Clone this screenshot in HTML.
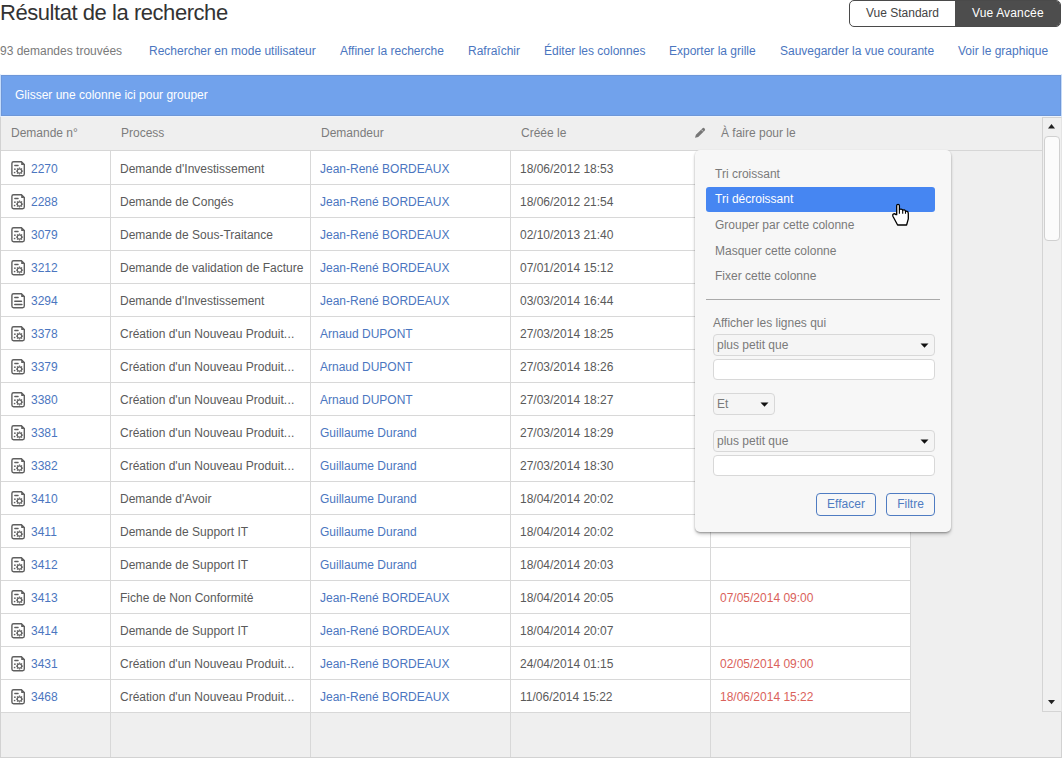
<!DOCTYPE html><html><head><meta charset="utf-8"><style>
*{margin:0;padding:0;box-sizing:border-box}
html,body{width:1062px;height:759px;overflow:hidden;background:#fff;font-family:"Liberation Sans",sans-serif;font-size:12px;position:relative}
.t{position:absolute;white-space:nowrap;line-height:14px;font-size:12px}
.title{position:absolute;left:0;top:0px;font-size:22px;letter-spacing:-0.45px;line-height:26px;color:#333;white-space:nowrap}
.tog{position:absolute;left:849px;top:0;width:212px;height:27px;border:1px solid #4a4a4a;border-radius:5px;overflow:hidden;background:#fff}
.tog div{position:absolute;top:0;height:25px;line-height:16px;padding-top:0;white-space:nowrap;font-size:12px}
.tog .std{left:0;width:105px;color:#444;text-indent:16px;top:4px}
.tog .adv{left:105px;width:106px;letter-spacing:.15px;background:#4d4d4d;color:#fff;text-indent:17px;padding-top:4px;height:26px}
.cnt{color:#7a7a7a}
.lnk{color:#4b76c0}
.txt{color:#5a5a5a}
.red{color:#da625b}
.ht{color:#7c7c7c}
.grp{color:#fff}
.grid{position:absolute;left:0;top:75px;width:1062px;height:683px;border:1px solid #d2d2d2;background:#efefef}
.grpbar{position:absolute;left:0;top:74px;width:1062px;height:43px;border:1px solid #c6dcfa;border-top-color:#f4f8fe;border-bottom-color:#eef4fc;background:#71a2ec;box-shadow:inset 0 0 0 1px #6e97d8}
.hdr{position:absolute;left:1px;top:150px;width:1041px;height:1px;background:#d6d6d6}
.data{position:absolute;left:1px;top:151px;width:909px;height:561px;background:#fff}
.hl{position:absolute;left:1px;width:909px;height:1px;background:#d8d8d8}
.vl{position:absolute;top:151px;width:1px;height:606px;background:#d8d8d8}
.sb{position:absolute;left:1042px;top:117px;width:20px;height:595px;border:1px solid #d4d4d4;border-right-color:#e4e4e4;background:#f0f0f0}
.thumb{position:absolute;left:1px;top:18px;width:16px;height:105px;border:1px solid #d0d0d0;border-radius:4px;background:#fbfbfb}
.menu{position:absolute;left:695px;top:150px;width:256px;height:382px;background:#f7f7f7;border-radius:5px;box-shadow:0 1px 2px rgba(0,0,0,.3),0 3px 4px -1px rgba(0,0,0,.22)}
.hi{position:absolute;left:706px;top:187px;width:229px;height:25px;background:#4686f2;border-radius:3px}
.mt{color:#7a7a7a}
.mt.sel{color:#fff}
.sep{position:absolute;left:706px;top:299px;width:234px;height:1px;background:#aaa}
.sel1{position:absolute;left:713px;width:222px;height:22px;border:1px solid #d8d8d8;border-radius:4px;background:#f5f5f5}
.sel2{position:absolute;left:713px;top:393px;width:62px;height:22px;border:1px solid #d8d8d8;border-radius:4px;background:#f5f5f5}
.inp{position:absolute;left:713px;width:222px;height:21px;border:1px solid #d8d8d8;border-radius:4px;background:#fff}
.btn{position:absolute;top:493px;height:23px;border:1.5px solid #4f7cc2;border-radius:4px;color:#4f7cc2;text-align:center;line-height:20px;font-size:12px}
</style></head><body><div class="title">Résultat de la recherche</div>
<div class="tog"><div class="std">Vue Standard</div><div class="adv">Vue Avancée</div></div>
<div class="t cnt" style="left:0px;top:44px;">93 demandes trouvées</div>
<div class="t lnk" style="left:149px;top:44px;">Rechercher en mode utilisateur</div>
<div class="t lnk" style="left:340px;top:44px;">Affiner la recherche</div>
<div class="t lnk" style="left:468px;top:44px;">Rafraîchir</div>
<div class="t lnk" style="left:544px;top:44px;">Éditer les colonnes</div>
<div class="t lnk" style="left:669px;top:44px;">Exporter la grille</div>
<div class="t lnk" style="left:780px;top:44px;">Sauvegarder la vue courante</div>
<div class="t lnk" style="left:958px;top:44px;">Voir le graphique</div>
<div class="grid"></div>
<div class="grpbar"></div>
<div class="t grp" style="left:15px;top:88px;">Glisser une colonne ici pour grouper</div>
<div class="hdr"></div>
<div class="t ht" style="left:11px;top:126px;">Demande n°</div>
<div class="t ht" style="left:121px;top:126px;">Process</div>
<div class="t ht" style="left:321px;top:126px;">Demandeur</div>
<div class="t ht" style="left:521px;top:126px;">Créée le</div>
<div class="t ht" style="left:721px;top:126px;">À faire pour le</div>
<svg class="pen" width="25" height="25" viewBox="0 0 25 25" style="position:absolute;left:688px;top:120px"><path d="M7.0 17.8L7.9 14.8L14.3 8.4Q15.5 7.3 16.6 8.4Q17.7 9.6 16.6 10.7L10.2 17.1Z" fill="#777"/><path d="M13.2 9.5L15.2 11.5" stroke="#f0f0f0" stroke-width="0.7"/></svg>
<div class="data"></div>
<div class="hl" style="top:184px"></div>
<div class="hl" style="top:217px"></div>
<div class="hl" style="top:250px"></div>
<div class="hl" style="top:283px"></div>
<div class="hl" style="top:316px"></div>
<div class="hl" style="top:349px"></div>
<div class="hl" style="top:382px"></div>
<div class="hl" style="top:415px"></div>
<div class="hl" style="top:448px"></div>
<div class="hl" style="top:481px"></div>
<div class="hl" style="top:514px"></div>
<div class="hl" style="top:547px"></div>
<div class="hl" style="top:580px"></div>
<div class="hl" style="top:613px"></div>
<div class="hl" style="top:646px"></div>
<div class="hl" style="top:679px"></div>
<div class="hl" style="top:712px"></div>
<div class="vl" style="left:110px"></div>
<div class="vl" style="left:310px"></div>
<div class="vl" style="left:510px"></div>
<div class="vl" style="left:710px"></div>
<div class="vl" style="left:910px"></div>
<svg width="22" height="22" viewBox="0 0 22 22" style="position:absolute;left:8px;top:158px"><path d="M5.6 3.7H13.4L16.3 6.6V16Q16.3 17.7 14.6 17.7H5.6Q3.9 17.7 3.9 16V5.4Q3.9 3.7 5.6 3.7Z" fill="none" stroke="#5f5f5f" stroke-width="1.4"/><path d="M13.2 3.6L16.5 6.9H13.2Z" fill="#5f5f5f"/><path d="M6.8 7.5H10.1" stroke="#5f5f5f" stroke-width="1.3" stroke-linecap="round"/><circle cx="6.9" cy="11.2" r=".85" fill="#5f5f5f"/><circle cx="6.6" cy="14.5" r=".85" fill="#5f5f5f"/><circle cx="11.5" cy="13.0" r="2.17" fill="none" stroke="#5f5f5f" stroke-width="1.15"/><path d="M11.50 10.40L11.50 9.45M13.34 11.16L14.01 10.49M14.10 13.00L15.05 13.00M13.34 14.84L14.01 15.51M11.50 15.60L11.50 16.55M9.66 14.84L8.99 15.51M8.90 13.00L7.95 13.00M9.66 11.16L8.99 10.49" stroke="#5f5f5f" stroke-width="1.25"/></svg>
<div class="t lnk" style="left:31px;top:162px;">2270</div>
<div class="t txt" style="left:120px;top:162px;">Demande d&#39;Investissement</div>
<div class="t lnk" style="left:320px;top:162px;">Jean-René BORDEAUX</div>
<div class="t txt" style="left:520px;top:162px;">18/06/2012 18:53</div>
<svg width="22" height="22" viewBox="0 0 22 22" style="position:absolute;left:8px;top:191px"><path d="M5.6 3.7H13.4L16.3 6.6V16Q16.3 17.7 14.6 17.7H5.6Q3.9 17.7 3.9 16V5.4Q3.9 3.7 5.6 3.7Z" fill="none" stroke="#5f5f5f" stroke-width="1.4"/><path d="M13.2 3.6L16.5 6.9H13.2Z" fill="#5f5f5f"/><path d="M6.8 7.5H10.1" stroke="#5f5f5f" stroke-width="1.3" stroke-linecap="round"/><circle cx="6.9" cy="11.2" r=".85" fill="#5f5f5f"/><circle cx="6.6" cy="14.5" r=".85" fill="#5f5f5f"/><circle cx="11.5" cy="13.0" r="2.17" fill="none" stroke="#5f5f5f" stroke-width="1.15"/><path d="M11.50 10.40L11.50 9.45M13.34 11.16L14.01 10.49M14.10 13.00L15.05 13.00M13.34 14.84L14.01 15.51M11.50 15.60L11.50 16.55M9.66 14.84L8.99 15.51M8.90 13.00L7.95 13.00M9.66 11.16L8.99 10.49" stroke="#5f5f5f" stroke-width="1.25"/></svg>
<div class="t lnk" style="left:31px;top:195px;">2288</div>
<div class="t txt" style="left:120px;top:195px;">Demande de Congés</div>
<div class="t lnk" style="left:320px;top:195px;">Jean-René BORDEAUX</div>
<div class="t txt" style="left:520px;top:195px;">18/06/2012 21:54</div>
<svg width="22" height="22" viewBox="0 0 22 22" style="position:absolute;left:8px;top:224px"><path d="M5.6 3.7H13.4L16.3 6.6V16Q16.3 17.7 14.6 17.7H5.6Q3.9 17.7 3.9 16V5.4Q3.9 3.7 5.6 3.7Z" fill="none" stroke="#5f5f5f" stroke-width="1.4"/><path d="M13.2 3.6L16.5 6.9H13.2Z" fill="#5f5f5f"/><path d="M6.8 7.5H10.1" stroke="#5f5f5f" stroke-width="1.3" stroke-linecap="round"/><circle cx="6.9" cy="11.2" r=".85" fill="#5f5f5f"/><circle cx="6.6" cy="14.5" r=".85" fill="#5f5f5f"/><circle cx="11.5" cy="13.0" r="2.17" fill="none" stroke="#5f5f5f" stroke-width="1.15"/><path d="M11.50 10.40L11.50 9.45M13.34 11.16L14.01 10.49M14.10 13.00L15.05 13.00M13.34 14.84L14.01 15.51M11.50 15.60L11.50 16.55M9.66 14.84L8.99 15.51M8.90 13.00L7.95 13.00M9.66 11.16L8.99 10.49" stroke="#5f5f5f" stroke-width="1.25"/></svg>
<div class="t lnk" style="left:31px;top:228px;">3079</div>
<div class="t txt" style="left:120px;top:228px;">Demande de Sous-Traitance</div>
<div class="t lnk" style="left:320px;top:228px;">Jean-René BORDEAUX</div>
<div class="t txt" style="left:520px;top:228px;">02/10/2013 21:40</div>
<svg width="22" height="22" viewBox="0 0 22 22" style="position:absolute;left:8px;top:257px"><path d="M5.6 3.7H13.4L16.3 6.6V16Q16.3 17.7 14.6 17.7H5.6Q3.9 17.7 3.9 16V5.4Q3.9 3.7 5.6 3.7Z" fill="none" stroke="#5f5f5f" stroke-width="1.4"/><path d="M13.2 3.6L16.5 6.9H13.2Z" fill="#5f5f5f"/><path d="M6.8 7.5H10.1" stroke="#5f5f5f" stroke-width="1.3" stroke-linecap="round"/><circle cx="6.9" cy="11.2" r=".85" fill="#5f5f5f"/><circle cx="6.6" cy="14.5" r=".85" fill="#5f5f5f"/><circle cx="11.5" cy="13.0" r="2.17" fill="none" stroke="#5f5f5f" stroke-width="1.15"/><path d="M11.50 10.40L11.50 9.45M13.34 11.16L14.01 10.49M14.10 13.00L15.05 13.00M13.34 14.84L14.01 15.51M11.50 15.60L11.50 16.55M9.66 14.84L8.99 15.51M8.90 13.00L7.95 13.00M9.66 11.16L8.99 10.49" stroke="#5f5f5f" stroke-width="1.25"/></svg>
<div class="t lnk" style="left:31px;top:261px;">3212</div>
<div class="t txt" style="left:120px;top:261px;">Demande de validation de Facture</div>
<div class="t lnk" style="left:320px;top:261px;">Jean-René BORDEAUX</div>
<div class="t txt" style="left:520px;top:261px;">07/01/2014 15:12</div>
<svg width="22" height="22" viewBox="0 0 22 22" style="position:absolute;left:8px;top:290px"><path d="M5.6 3.7H13.4L16.3 6.6V16Q16.3 17.7 14.6 17.7H5.6Q3.9 17.7 3.9 16V5.4Q3.9 3.7 5.6 3.7Z" fill="none" stroke="#5f5f5f" stroke-width="1.4"/><path d="M13.2 3.6L16.5 6.9H13.2Z" fill="#5f5f5f"/><path d="M6.8 7.5H10.1M6.8 11.2H13.5M6.8 14.5H13.9" stroke="#5a5a5a" stroke-width="1.45" stroke-linecap="round"/></svg>
<div class="t lnk" style="left:31px;top:294px;">3294</div>
<div class="t txt" style="left:120px;top:294px;">Demande d&#39;Investissement</div>
<div class="t lnk" style="left:320px;top:294px;">Jean-René BORDEAUX</div>
<div class="t txt" style="left:520px;top:294px;">03/03/2014 16:44</div>
<svg width="22" height="22" viewBox="0 0 22 22" style="position:absolute;left:8px;top:323px"><path d="M5.6 3.7H13.4L16.3 6.6V16Q16.3 17.7 14.6 17.7H5.6Q3.9 17.7 3.9 16V5.4Q3.9 3.7 5.6 3.7Z" fill="none" stroke="#5f5f5f" stroke-width="1.4"/><path d="M13.2 3.6L16.5 6.9H13.2Z" fill="#5f5f5f"/><path d="M6.8 7.5H10.1" stroke="#5f5f5f" stroke-width="1.3" stroke-linecap="round"/><circle cx="6.9" cy="11.2" r=".85" fill="#5f5f5f"/><circle cx="6.6" cy="14.5" r=".85" fill="#5f5f5f"/><circle cx="11.5" cy="13.0" r="2.17" fill="none" stroke="#5f5f5f" stroke-width="1.15"/><path d="M11.50 10.40L11.50 9.45M13.34 11.16L14.01 10.49M14.10 13.00L15.05 13.00M13.34 14.84L14.01 15.51M11.50 15.60L11.50 16.55M9.66 14.84L8.99 15.51M8.90 13.00L7.95 13.00M9.66 11.16L8.99 10.49" stroke="#5f5f5f" stroke-width="1.25"/></svg>
<div class="t lnk" style="left:31px;top:327px;">3378</div>
<div class="t txt" style="left:120px;top:327px;">Création d&#39;un Nouveau Produit<span style="letter-spacing:.35px">...</span></div>
<div class="t lnk" style="left:320px;top:327px;">Arnaud DUPONT</div>
<div class="t txt" style="left:520px;top:327px;">27/03/2014 18:25</div>
<svg width="22" height="22" viewBox="0 0 22 22" style="position:absolute;left:8px;top:356px"><path d="M5.6 3.7H13.4L16.3 6.6V16Q16.3 17.7 14.6 17.7H5.6Q3.9 17.7 3.9 16V5.4Q3.9 3.7 5.6 3.7Z" fill="none" stroke="#5f5f5f" stroke-width="1.4"/><path d="M13.2 3.6L16.5 6.9H13.2Z" fill="#5f5f5f"/><path d="M6.8 7.5H10.1" stroke="#5f5f5f" stroke-width="1.3" stroke-linecap="round"/><circle cx="6.9" cy="11.2" r=".85" fill="#5f5f5f"/><circle cx="6.6" cy="14.5" r=".85" fill="#5f5f5f"/><circle cx="11.5" cy="13.0" r="2.17" fill="none" stroke="#5f5f5f" stroke-width="1.15"/><path d="M11.50 10.40L11.50 9.45M13.34 11.16L14.01 10.49M14.10 13.00L15.05 13.00M13.34 14.84L14.01 15.51M11.50 15.60L11.50 16.55M9.66 14.84L8.99 15.51M8.90 13.00L7.95 13.00M9.66 11.16L8.99 10.49" stroke="#5f5f5f" stroke-width="1.25"/></svg>
<div class="t lnk" style="left:31px;top:360px;">3379</div>
<div class="t txt" style="left:120px;top:360px;">Création d&#39;un Nouveau Produit<span style="letter-spacing:.35px">...</span></div>
<div class="t lnk" style="left:320px;top:360px;">Arnaud DUPONT</div>
<div class="t txt" style="left:520px;top:360px;">27/03/2014 18:26</div>
<svg width="22" height="22" viewBox="0 0 22 22" style="position:absolute;left:8px;top:389px"><path d="M5.6 3.7H13.4L16.3 6.6V16Q16.3 17.7 14.6 17.7H5.6Q3.9 17.7 3.9 16V5.4Q3.9 3.7 5.6 3.7Z" fill="none" stroke="#5f5f5f" stroke-width="1.4"/><path d="M13.2 3.6L16.5 6.9H13.2Z" fill="#5f5f5f"/><path d="M6.8 7.5H10.1" stroke="#5f5f5f" stroke-width="1.3" stroke-linecap="round"/><circle cx="6.9" cy="11.2" r=".85" fill="#5f5f5f"/><circle cx="6.6" cy="14.5" r=".85" fill="#5f5f5f"/><circle cx="11.5" cy="13.0" r="2.17" fill="none" stroke="#5f5f5f" stroke-width="1.15"/><path d="M11.50 10.40L11.50 9.45M13.34 11.16L14.01 10.49M14.10 13.00L15.05 13.00M13.34 14.84L14.01 15.51M11.50 15.60L11.50 16.55M9.66 14.84L8.99 15.51M8.90 13.00L7.95 13.00M9.66 11.16L8.99 10.49" stroke="#5f5f5f" stroke-width="1.25"/></svg>
<div class="t lnk" style="left:31px;top:393px;">3380</div>
<div class="t txt" style="left:120px;top:393px;">Création d&#39;un Nouveau Produit<span style="letter-spacing:.35px">...</span></div>
<div class="t lnk" style="left:320px;top:393px;">Arnaud DUPONT</div>
<div class="t txt" style="left:520px;top:393px;">27/03/2014 18:27</div>
<svg width="22" height="22" viewBox="0 0 22 22" style="position:absolute;left:8px;top:422px"><path d="M5.6 3.7H13.4L16.3 6.6V16Q16.3 17.7 14.6 17.7H5.6Q3.9 17.7 3.9 16V5.4Q3.9 3.7 5.6 3.7Z" fill="none" stroke="#5f5f5f" stroke-width="1.4"/><path d="M13.2 3.6L16.5 6.9H13.2Z" fill="#5f5f5f"/><path d="M6.8 7.5H10.1" stroke="#5f5f5f" stroke-width="1.3" stroke-linecap="round"/><circle cx="6.9" cy="11.2" r=".85" fill="#5f5f5f"/><circle cx="6.6" cy="14.5" r=".85" fill="#5f5f5f"/><circle cx="11.5" cy="13.0" r="2.17" fill="none" stroke="#5f5f5f" stroke-width="1.15"/><path d="M11.50 10.40L11.50 9.45M13.34 11.16L14.01 10.49M14.10 13.00L15.05 13.00M13.34 14.84L14.01 15.51M11.50 15.60L11.50 16.55M9.66 14.84L8.99 15.51M8.90 13.00L7.95 13.00M9.66 11.16L8.99 10.49" stroke="#5f5f5f" stroke-width="1.25"/></svg>
<div class="t lnk" style="left:31px;top:426px;">3381</div>
<div class="t txt" style="left:120px;top:426px;">Création d&#39;un Nouveau Produit<span style="letter-spacing:.35px">...</span></div>
<div class="t lnk" style="left:320px;top:426px;">Guillaume Durand</div>
<div class="t txt" style="left:520px;top:426px;">27/03/2014 18:29</div>
<svg width="22" height="22" viewBox="0 0 22 22" style="position:absolute;left:8px;top:455px"><path d="M5.6 3.7H13.4L16.3 6.6V16Q16.3 17.7 14.6 17.7H5.6Q3.9 17.7 3.9 16V5.4Q3.9 3.7 5.6 3.7Z" fill="none" stroke="#5f5f5f" stroke-width="1.4"/><path d="M13.2 3.6L16.5 6.9H13.2Z" fill="#5f5f5f"/><path d="M6.8 7.5H10.1" stroke="#5f5f5f" stroke-width="1.3" stroke-linecap="round"/><circle cx="6.9" cy="11.2" r=".85" fill="#5f5f5f"/><circle cx="6.6" cy="14.5" r=".85" fill="#5f5f5f"/><circle cx="11.5" cy="13.0" r="2.17" fill="none" stroke="#5f5f5f" stroke-width="1.15"/><path d="M11.50 10.40L11.50 9.45M13.34 11.16L14.01 10.49M14.10 13.00L15.05 13.00M13.34 14.84L14.01 15.51M11.50 15.60L11.50 16.55M9.66 14.84L8.99 15.51M8.90 13.00L7.95 13.00M9.66 11.16L8.99 10.49" stroke="#5f5f5f" stroke-width="1.25"/></svg>
<div class="t lnk" style="left:31px;top:459px;">3382</div>
<div class="t txt" style="left:120px;top:459px;">Création d&#39;un Nouveau Produit<span style="letter-spacing:.35px">...</span></div>
<div class="t lnk" style="left:320px;top:459px;">Guillaume Durand</div>
<div class="t txt" style="left:520px;top:459px;">27/03/2014 18:30</div>
<svg width="22" height="22" viewBox="0 0 22 22" style="position:absolute;left:8px;top:488px"><path d="M5.6 3.7H13.4L16.3 6.6V16Q16.3 17.7 14.6 17.7H5.6Q3.9 17.7 3.9 16V5.4Q3.9 3.7 5.6 3.7Z" fill="none" stroke="#5f5f5f" stroke-width="1.4"/><path d="M13.2 3.6L16.5 6.9H13.2Z" fill="#5f5f5f"/><path d="M6.8 7.5H10.1" stroke="#5f5f5f" stroke-width="1.3" stroke-linecap="round"/><circle cx="6.9" cy="11.2" r=".85" fill="#5f5f5f"/><circle cx="6.6" cy="14.5" r=".85" fill="#5f5f5f"/><circle cx="11.5" cy="13.0" r="2.17" fill="none" stroke="#5f5f5f" stroke-width="1.15"/><path d="M11.50 10.40L11.50 9.45M13.34 11.16L14.01 10.49M14.10 13.00L15.05 13.00M13.34 14.84L14.01 15.51M11.50 15.60L11.50 16.55M9.66 14.84L8.99 15.51M8.90 13.00L7.95 13.00M9.66 11.16L8.99 10.49" stroke="#5f5f5f" stroke-width="1.25"/></svg>
<div class="t lnk" style="left:31px;top:492px;">3410</div>
<div class="t txt" style="left:120px;top:492px;">Demande d&#39;Avoir</div>
<div class="t lnk" style="left:320px;top:492px;">Guillaume Durand</div>
<div class="t txt" style="left:520px;top:492px;">18/04/2014 20:02</div>
<svg width="22" height="22" viewBox="0 0 22 22" style="position:absolute;left:8px;top:521px"><path d="M5.6 3.7H13.4L16.3 6.6V16Q16.3 17.7 14.6 17.7H5.6Q3.9 17.7 3.9 16V5.4Q3.9 3.7 5.6 3.7Z" fill="none" stroke="#5f5f5f" stroke-width="1.4"/><path d="M13.2 3.6L16.5 6.9H13.2Z" fill="#5f5f5f"/><path d="M6.8 7.5H10.1" stroke="#5f5f5f" stroke-width="1.3" stroke-linecap="round"/><circle cx="6.9" cy="11.2" r=".85" fill="#5f5f5f"/><circle cx="6.6" cy="14.5" r=".85" fill="#5f5f5f"/><circle cx="11.5" cy="13.0" r="2.17" fill="none" stroke="#5f5f5f" stroke-width="1.15"/><path d="M11.50 10.40L11.50 9.45M13.34 11.16L14.01 10.49M14.10 13.00L15.05 13.00M13.34 14.84L14.01 15.51M11.50 15.60L11.50 16.55M9.66 14.84L8.99 15.51M8.90 13.00L7.95 13.00M9.66 11.16L8.99 10.49" stroke="#5f5f5f" stroke-width="1.25"/></svg>
<div class="t lnk" style="left:31px;top:525px;">3411</div>
<div class="t txt" style="left:120px;top:525px;">Demande de Support IT</div>
<div class="t lnk" style="left:320px;top:525px;">Guillaume Durand</div>
<div class="t txt" style="left:520px;top:525px;">18/04/2014 20:02</div>
<svg width="22" height="22" viewBox="0 0 22 22" style="position:absolute;left:8px;top:554px"><path d="M5.6 3.7H13.4L16.3 6.6V16Q16.3 17.7 14.6 17.7H5.6Q3.9 17.7 3.9 16V5.4Q3.9 3.7 5.6 3.7Z" fill="none" stroke="#5f5f5f" stroke-width="1.4"/><path d="M13.2 3.6L16.5 6.9H13.2Z" fill="#5f5f5f"/><path d="M6.8 7.5H10.1" stroke="#5f5f5f" stroke-width="1.3" stroke-linecap="round"/><circle cx="6.9" cy="11.2" r=".85" fill="#5f5f5f"/><circle cx="6.6" cy="14.5" r=".85" fill="#5f5f5f"/><circle cx="11.5" cy="13.0" r="2.17" fill="none" stroke="#5f5f5f" stroke-width="1.15"/><path d="M11.50 10.40L11.50 9.45M13.34 11.16L14.01 10.49M14.10 13.00L15.05 13.00M13.34 14.84L14.01 15.51M11.50 15.60L11.50 16.55M9.66 14.84L8.99 15.51M8.90 13.00L7.95 13.00M9.66 11.16L8.99 10.49" stroke="#5f5f5f" stroke-width="1.25"/></svg>
<div class="t lnk" style="left:31px;top:558px;">3412</div>
<div class="t txt" style="left:120px;top:558px;">Demande de Support IT</div>
<div class="t lnk" style="left:320px;top:558px;">Guillaume Durand</div>
<div class="t txt" style="left:520px;top:558px;">18/04/2014 20:03</div>
<svg width="22" height="22" viewBox="0 0 22 22" style="position:absolute;left:8px;top:587px"><path d="M5.6 3.7H13.4L16.3 6.6V16Q16.3 17.7 14.6 17.7H5.6Q3.9 17.7 3.9 16V5.4Q3.9 3.7 5.6 3.7Z" fill="none" stroke="#5f5f5f" stroke-width="1.4"/><path d="M13.2 3.6L16.5 6.9H13.2Z" fill="#5f5f5f"/><path d="M6.8 7.5H10.1" stroke="#5f5f5f" stroke-width="1.3" stroke-linecap="round"/><circle cx="6.9" cy="11.2" r=".85" fill="#5f5f5f"/><circle cx="6.6" cy="14.5" r=".85" fill="#5f5f5f"/><circle cx="11.5" cy="13.0" r="2.17" fill="none" stroke="#5f5f5f" stroke-width="1.15"/><path d="M11.50 10.40L11.50 9.45M13.34 11.16L14.01 10.49M14.10 13.00L15.05 13.00M13.34 14.84L14.01 15.51M11.50 15.60L11.50 16.55M9.66 14.84L8.99 15.51M8.90 13.00L7.95 13.00M9.66 11.16L8.99 10.49" stroke="#5f5f5f" stroke-width="1.25"/></svg>
<div class="t lnk" style="left:31px;top:591px;">3413</div>
<div class="t txt" style="left:120px;top:591px;">Fiche de Non Conformité</div>
<div class="t lnk" style="left:320px;top:591px;">Jean-René BORDEAUX</div>
<div class="t txt" style="left:520px;top:591px;">18/04/2014 20:05</div>
<div class="t red" style="left:720px;top:591px;">07/05/2014 09:00</div>
<svg width="22" height="22" viewBox="0 0 22 22" style="position:absolute;left:8px;top:620px"><path d="M5.6 3.7H13.4L16.3 6.6V16Q16.3 17.7 14.6 17.7H5.6Q3.9 17.7 3.9 16V5.4Q3.9 3.7 5.6 3.7Z" fill="none" stroke="#5f5f5f" stroke-width="1.4"/><path d="M13.2 3.6L16.5 6.9H13.2Z" fill="#5f5f5f"/><path d="M6.8 7.5H10.1" stroke="#5f5f5f" stroke-width="1.3" stroke-linecap="round"/><circle cx="6.9" cy="11.2" r=".85" fill="#5f5f5f"/><circle cx="6.6" cy="14.5" r=".85" fill="#5f5f5f"/><circle cx="11.5" cy="13.0" r="2.17" fill="none" stroke="#5f5f5f" stroke-width="1.15"/><path d="M11.50 10.40L11.50 9.45M13.34 11.16L14.01 10.49M14.10 13.00L15.05 13.00M13.34 14.84L14.01 15.51M11.50 15.60L11.50 16.55M9.66 14.84L8.99 15.51M8.90 13.00L7.95 13.00M9.66 11.16L8.99 10.49" stroke="#5f5f5f" stroke-width="1.25"/></svg>
<div class="t lnk" style="left:31px;top:624px;">3414</div>
<div class="t txt" style="left:120px;top:624px;">Demande de Support IT</div>
<div class="t lnk" style="left:320px;top:624px;">Jean-René BORDEAUX</div>
<div class="t txt" style="left:520px;top:624px;">18/04/2014 20:07</div>
<svg width="22" height="22" viewBox="0 0 22 22" style="position:absolute;left:8px;top:653px"><path d="M5.6 3.7H13.4L16.3 6.6V16Q16.3 17.7 14.6 17.7H5.6Q3.9 17.7 3.9 16V5.4Q3.9 3.7 5.6 3.7Z" fill="none" stroke="#5f5f5f" stroke-width="1.4"/><path d="M13.2 3.6L16.5 6.9H13.2Z" fill="#5f5f5f"/><path d="M6.8 7.5H10.1" stroke="#5f5f5f" stroke-width="1.3" stroke-linecap="round"/><circle cx="6.9" cy="11.2" r=".85" fill="#5f5f5f"/><circle cx="6.6" cy="14.5" r=".85" fill="#5f5f5f"/><circle cx="11.5" cy="13.0" r="2.17" fill="none" stroke="#5f5f5f" stroke-width="1.15"/><path d="M11.50 10.40L11.50 9.45M13.34 11.16L14.01 10.49M14.10 13.00L15.05 13.00M13.34 14.84L14.01 15.51M11.50 15.60L11.50 16.55M9.66 14.84L8.99 15.51M8.90 13.00L7.95 13.00M9.66 11.16L8.99 10.49" stroke="#5f5f5f" stroke-width="1.25"/></svg>
<div class="t lnk" style="left:31px;top:657px;">3431</div>
<div class="t txt" style="left:120px;top:657px;">Création d&#39;un Nouveau Produit<span style="letter-spacing:.35px">...</span></div>
<div class="t lnk" style="left:320px;top:657px;">Jean-René BORDEAUX</div>
<div class="t txt" style="left:520px;top:657px;">24/04/2014 01:15</div>
<div class="t red" style="left:720px;top:657px;">02/05/2014 09:00</div>
<svg width="22" height="22" viewBox="0 0 22 22" style="position:absolute;left:8px;top:686px"><path d="M5.6 3.7H13.4L16.3 6.6V16Q16.3 17.7 14.6 17.7H5.6Q3.9 17.7 3.9 16V5.4Q3.9 3.7 5.6 3.7Z" fill="none" stroke="#5f5f5f" stroke-width="1.4"/><path d="M13.2 3.6L16.5 6.9H13.2Z" fill="#5f5f5f"/><path d="M6.8 7.5H10.1" stroke="#5f5f5f" stroke-width="1.3" stroke-linecap="round"/><circle cx="6.9" cy="11.2" r=".85" fill="#5f5f5f"/><circle cx="6.6" cy="14.5" r=".85" fill="#5f5f5f"/><circle cx="11.5" cy="13.0" r="2.17" fill="none" stroke="#5f5f5f" stroke-width="1.15"/><path d="M11.50 10.40L11.50 9.45M13.34 11.16L14.01 10.49M14.10 13.00L15.05 13.00M13.34 14.84L14.01 15.51M11.50 15.60L11.50 16.55M9.66 14.84L8.99 15.51M8.90 13.00L7.95 13.00M9.66 11.16L8.99 10.49" stroke="#5f5f5f" stroke-width="1.25"/></svg>
<div class="t lnk" style="left:31px;top:690px;">3468</div>
<div class="t txt" style="left:120px;top:690px;">Création d&#39;un Nouveau Produit<span style="letter-spacing:.35px">...</span></div>
<div class="t lnk" style="left:320px;top:690px;">Jean-René BORDEAUX</div>
<div class="t txt" style="left:520px;top:690px;">11/06/2014 15:22</div>
<div class="t red" style="left:720px;top:690px;">18/06/2014 15:22</div>
<div class="sb"><div class="thumb"></div></div>
<svg width="10" height="8" style="position:absolute;left:1047px;top:122px"><path d="M1 6.5L4.5 2L8 6.5Z" fill="#222"/></svg>
<svg width="10" height="8" style="position:absolute;left:1047px;top:698px"><path d="M1 2L4.5 6.2L8 2Z" fill="#222"/></svg>
<div class="menu"></div>
<div class="hi"></div>
<div class="t mt" style="left:715px;top:167px;">Tri croissant</div>
<div class="t mt sel" style="left:715px;top:192px;">Tri décroissant</div>
<div class="t mt" style="left:715px;top:218px;">Grouper par cette colonne</div>
<div class="t mt" style="left:715px;top:244px;">Masquer cette colonne</div>
<div class="t mt" style="left:715px;top:269px;">Fixer cette colonne</div>
<div class="sep"></div>
<div class="t mt" style="left:713px;top:316px;">Afficher les lignes qui</div>
<div class="sel1" style="top:334px"></div>
<div class="t mt" style="left:717px;top:338px;">plus petit que</div>
<div class="inp" style="top:359px"></div>
<div class="sel2"></div>
<div class="t mt" style="left:717px;top:397px;">Et</div>
<div class="sel1" style="top:430px"></div>
<div class="t mt" style="left:717px;top:434px;">plus petit que</div>
<div class="inp" style="top:455px"></div>
<svg width="9" height="6" style="position:absolute;left:920px;top:343px"><path d="M.5 .5H8.5L4.5 4.8Z" fill="#111"/></svg>
<svg width="9" height="6" style="position:absolute;left:760px;top:402px"><path d="M.5 .5H8.5L4.5 4.8Z" fill="#111"/></svg>
<svg width="9" height="6" style="position:absolute;left:920px;top:439px"><path d="M.5 .5H8.5L4.5 4.8Z" fill="#111"/></svg>
<div class="btn" style="left:816px;width:60px">Effacer</div>
<div class="btn" style="left:886px;width:49px">Filtre</div>
<svg width="35" height="35" style="position:absolute;left:885px;top:195px" viewBox="0 0 35 35"><path d="M11.7 19.6V10.6Q11.7 9.3 13.05 9.3Q14.4 9.3 14.4 10.6V14.7Q14.9 14.0 16.1 14.1Q17.5 14.2 17.7 15.1Q18.4 14.7 19.3 14.9Q20.4 15.2 20.5 16.1Q21.3 15.9 22.2 16.4Q23.3 17.0 23.3 18.4V23.8L21.6 30.0H12.6L7.9 21.3Q7.3 19.9 8.3 19.1Q9.6 18.3 10.8 19.5Z" fill="#fff" stroke="#000" stroke-width="1.3" stroke-linejoin="round"/><path d="M14.4 14.7V18.8M17.7 15.1V18.8M20.5 16.1V18.8" stroke="#000" stroke-width="1.1"/></svg></body></html>
